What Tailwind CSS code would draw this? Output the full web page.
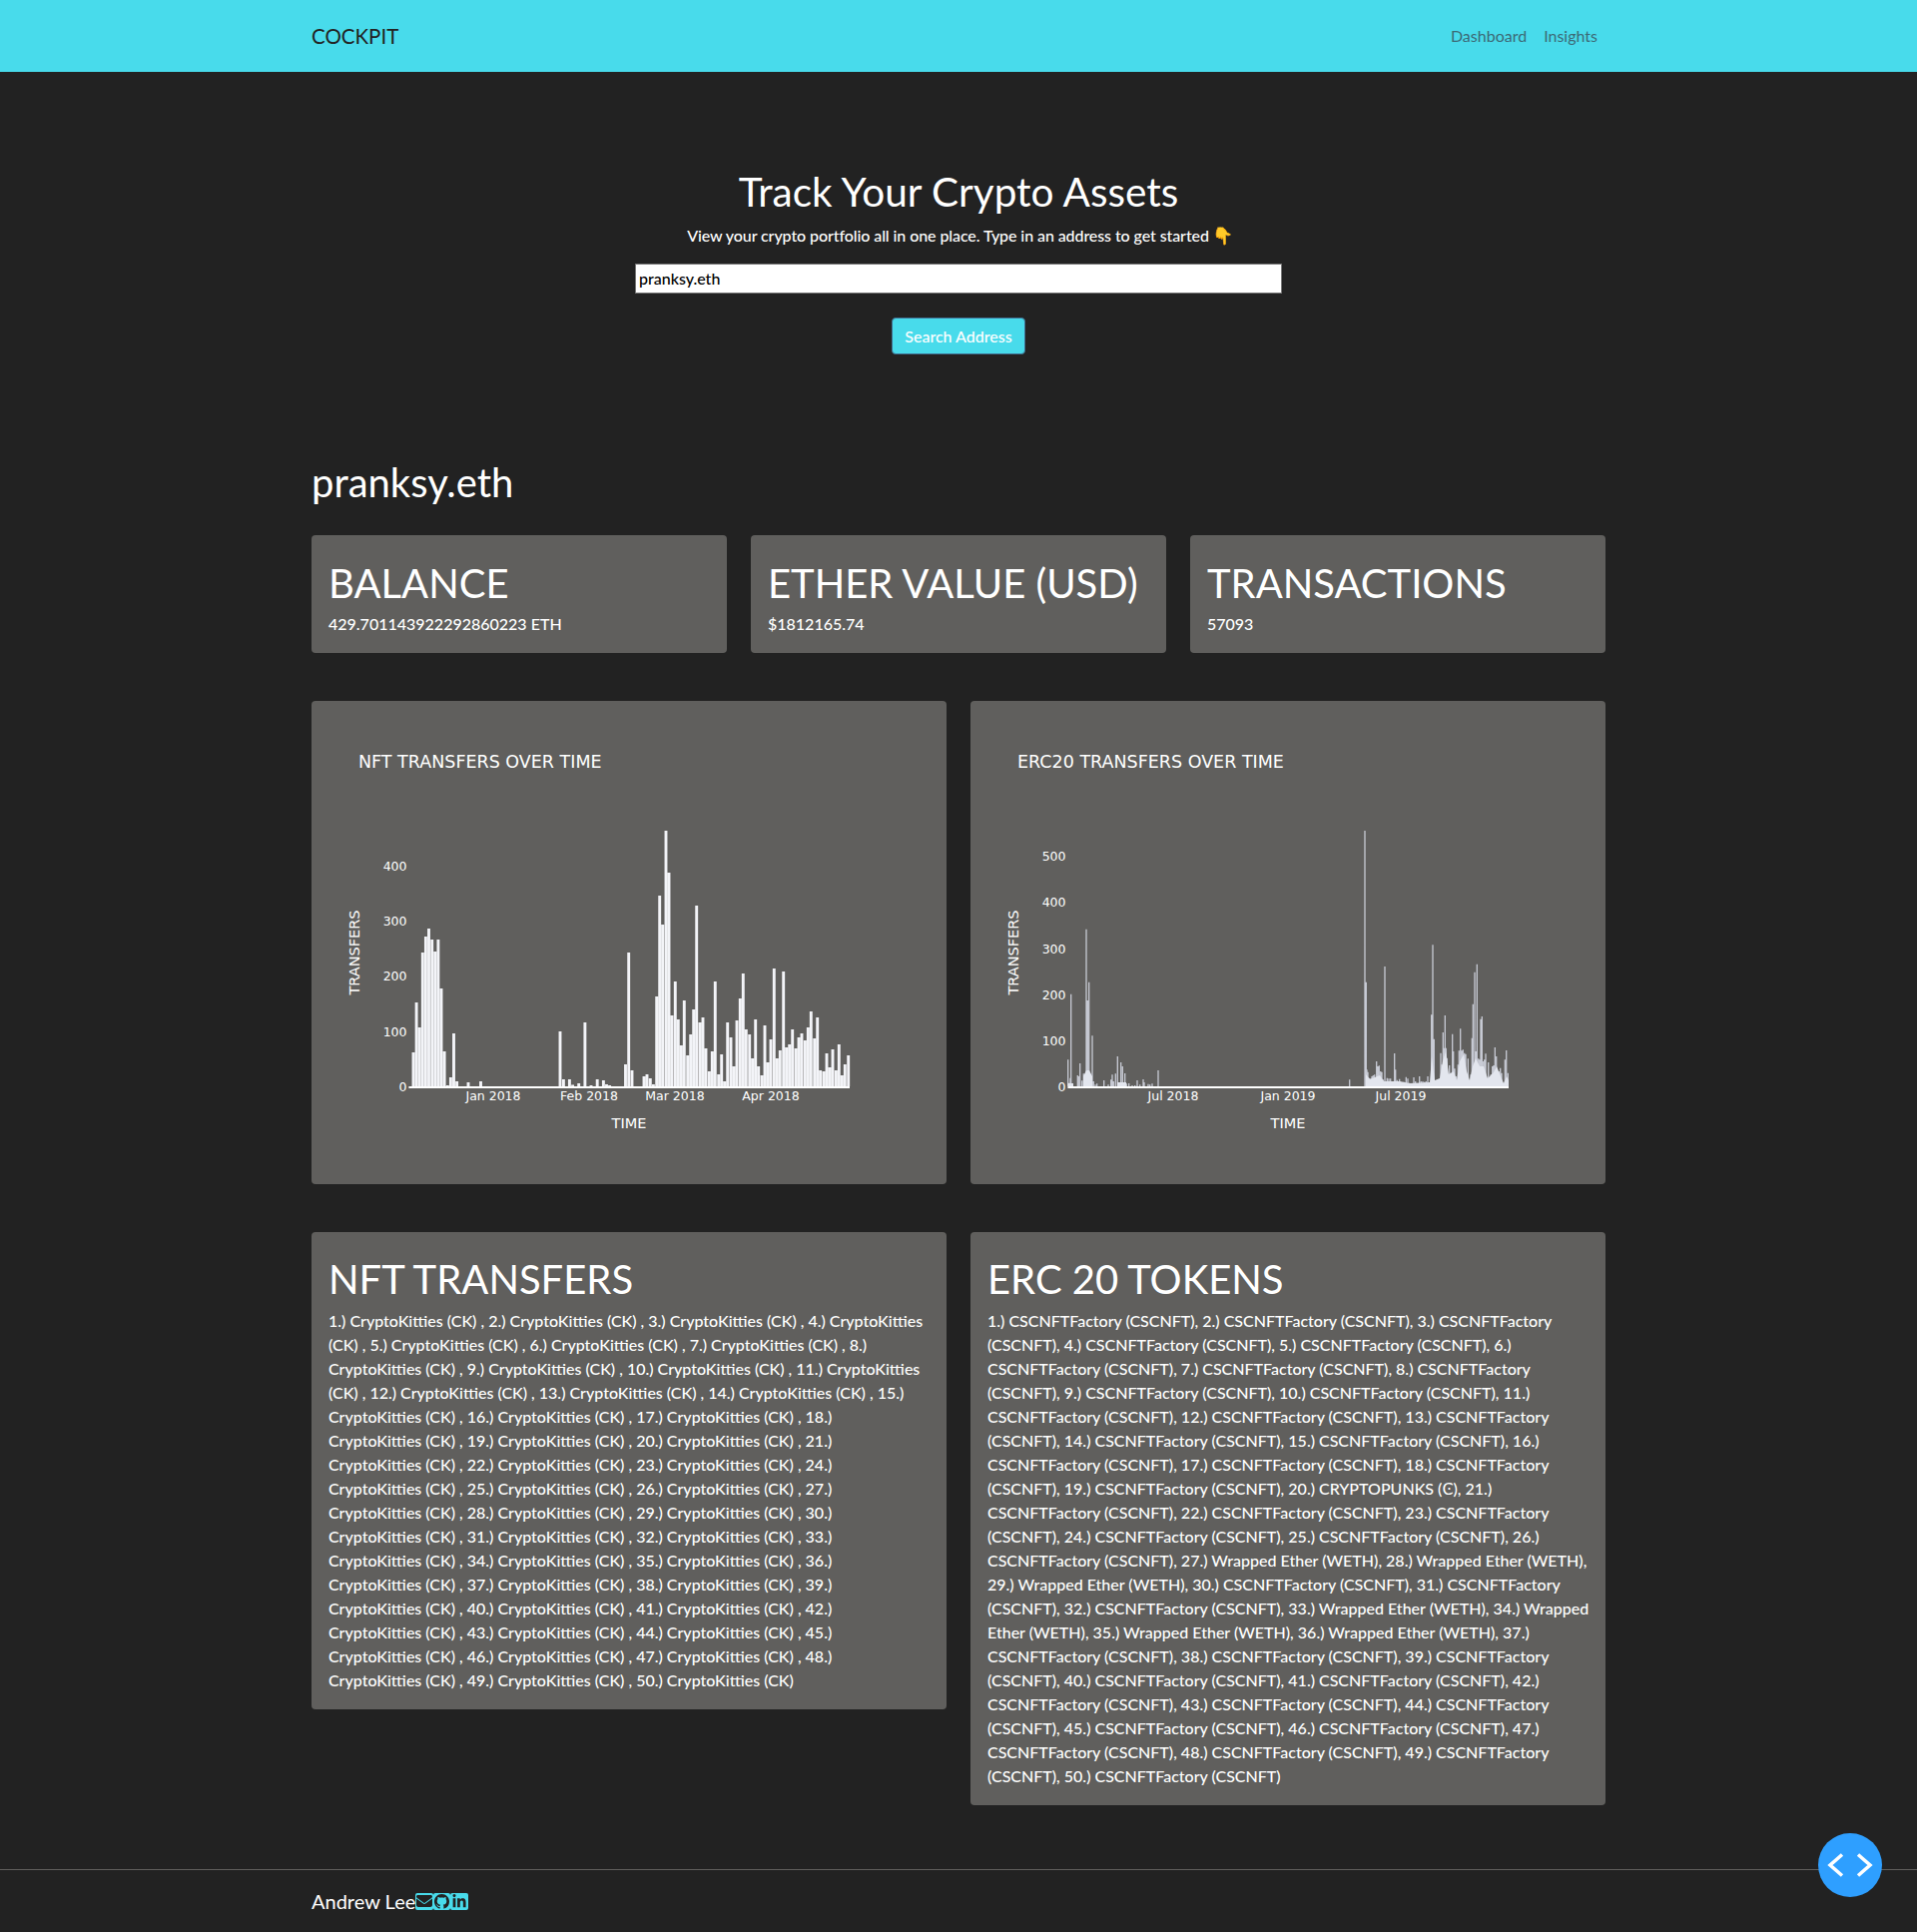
<!doctype html>
<html lang="en">
<head>
<meta charset="utf-8">
<title>Cockpit</title>
<script src="https://cdn.jsdelivr.net/npm/@tailwindcss/browser@4"></script>
</head>
<body class="bg-[#222222] text-white font-['Lato','Noto_Sans',sans-serif] text-base">
<nav class="h-[72px] bg-[#48dbeb]">
  <div class="w-[1296px] mx-auto h-full flex items-center justify-between">
    <a class="text-[20.5px] text-[#222222]">COCKPIT</a>
    <div class="flex gap-[17px] pr-2 text-base text-[#3c6a76]"><a>Dashboard</a><a>Insights</a></div>
  </div>
</nav>
<main class="w-[1296px] mx-auto">
  <section class="pt-[95px] pb-[103px] flex flex-col items-center">
    <h1 class="text-[40.5px] leading-[50px] font-normal">Track Your Crypto Assets</h1>
    <p class="mt-[7px] h-[24px] pl-[4px] leading-[24px] font-medium tracking-[-0.09px]">View your crypto portfolio all in one place. Type in an address to get started <span class="text-[17px] leading-none font-['Noto_Color_Emoji','DejaVu_Sans']">👇</span></p>
    <input class="mt-[16px] w-[648px] h-[30px] bg-white border border-[#777] px-[3px] pb-[2px] text-black font-medium outline-none" value="pranksy.eth">
    <button class="mt-[24px] w-[134px] h-[37px] rounded-[4px] bg-[#48dbeb] border border-[#3f6e8f] text-white font-medium">Search Address</button>
  </section>
  <h2 class="text-[40px] leading-[50px] mb-[28px]">pranksy.eth</h2>
  <div class="grid grid-cols-3 gap-6">
    <div class="h-[118px] bg-[#605f5d] rounded-[4px] px-[17px] pt-[23px]"><h3 class="text-[40px] leading-[50px] whitespace-nowrap">BALANCE</h3><p class="mt-[4px] leading-[24px] font-medium">429.701143922292860223 ETH</p></div>
    <div class="h-[118px] bg-[#605f5d] rounded-[4px] px-[17px] pt-[23px]"><h3 class="text-[40px] leading-[50px] whitespace-nowrap">ETHER VALUE (USD)</h3><p class="mt-[4px] leading-[24px] font-medium">$1812165.74</p></div>
    <div class="h-[118px] bg-[#605f5d] rounded-[4px] px-[17px] pt-[23px]"><h3 class="text-[40px] leading-[50px] whitespace-nowrap">TRANSACTIONS</h3><p class="mt-[4px] leading-[24px] font-medium">57093</p></div>
  </div>
  <div class="grid grid-cols-2 gap-6 mt-12">
    <div class="h-[484px] bg-[#605f5d] rounded-[4px]">
      <svg viewBox="0 0 636 484" class="block w-full h-full font-['DejaVu_Sans',sans-serif]" fill="#fff">
        <text x="47" y="67" font-size="17.500">NFT TRANSFERS OVER TIME</text>
        <text x="318" y="428" font-size="14.500" text-anchor="middle">TIME</text>
        <text transform="translate(47.500 252) rotate(-90)" font-size="14.500" text-anchor="middle">TRANSFERS</text>
        <g font-size="12.500" text-anchor="end">
          <text x="95.500" y="391">0</text><text x="95.500" y="336">100</text><text x="95.500" y="280">200</text><text x="95.500" y="225">300</text><text x="95.500" y="170">400</text>
        </g>
        <g font-size="12.500" text-anchor="middle">
          <text x="182" y="400">Jan 2018</text><text x="278" y="400">Feb 2018</text><text x="364" y="400">Mar 2018</text><text x="460" y="400">Apr 2018</text>
        </g>
        <path stroke="#f3f4f8" stroke-width="2.900" fill="none" d="M102 386v-34M105.100 386v-84M108.200 386v-59M111.300 386v-134M114.400 386v-150M117.500 386v-158M120.700 386v-147M123.800 386v-135M126.900 386v-147M130 386v-98M133.100 386v-35M136.300 386v-1M139.400 386v-9M142.500 386v-53M145.600 386v-5M157 386v-4M169.500 386v-5M249 386v-55M252.400 386v-7M258.400 386v-7M261.600 386v-1.500M267.700 386v-3M273.900 386v-64M280 386v-1M286.200 386v-7M292.400 386v-6M295.500 386v-2M298.600 386v-1M314.500 386v-22M317.700 386v-134M321 386v-16M333 386v-10M336 386v-12M339.300 386v-8M342.400 386v-2M345.700 386v-90M348.700 386v-191M351.700 386v-162M355 386v-256M358 386v-214M361 386v-71M364.300 386v-105M367.300 386v-67M370.300 386v-41M373.300 386v-86M376.700 386v-31M379.700 386v-52M382.700 386v-77M385.700 386v-181M389 386v-64M392 386v-69M395 386v-38M398.300 386v-15M401.300 386v-35M404.300 386v-105M407.700 386v-12M410.700 386v-32M413.700 386v-5M416.700 386v-64M420 386v-49M423 386v-20M426 386v-66M429.300 386v-88M432.300 386v-113M435.300 386v-57M438.700 386v-52M441.700 386v-28M444.700 386v-67M447.700 386v-20M451 386v-11M454 386v-61M457 386v-24M460 386v-47M463.300 386v-118M466.300 386v-28M469.300 386v-36M472.700 386v-115M475.700 386v-39M478.700 386v-42M481.700 386v-57M485 386v-38M488 386v-49M491 386v-53M494.300 386v-46M497.300 386v-59M500.300 386v-75M503.700 386v-48M506.700 386v-69M509.700 386v-16M513 386v-15M516 386v-33M519 386v-19M522 386v-37M525.300 386v-16M528.300 386v-42M531.300 386v-11M534.300 386v-22M537.700 386v-31"/>
        <path stroke="#fff" stroke-width="2" d="M97.400 387H539"/>
      </svg>
    </div>
    <div class="h-[484px] bg-[#605f5d] rounded-[4px]">
      <svg viewBox="0 0 636 484" class="block w-full h-full font-['DejaVu_Sans',sans-serif]" fill="#fff">
        <text x="47" y="67" font-size="17.500">ERC20 TRANSFERS OVER TIME</text>
        <text x="318" y="428" font-size="14.500" text-anchor="middle">TIME</text>
        <text transform="translate(47.500 252) rotate(-90)" font-size="14.500" text-anchor="middle">TRANSFERS</text>
        <g font-size="12.500" text-anchor="end">
          <text x="95.500" y="391">0</text><text x="95.500" y="345">100</text><text x="95.500" y="299">200</text><text x="95.500" y="253">300</text><text x="95.500" y="206">400</text><text x="95.500" y="160">500</text>
        </g>
        <g font-size="12.500" text-anchor="middle">
          <text x="203" y="400">Jul 2018</text><text x="318" y="400">Jan 2019</text><text x="431" y="400">Jul 2019</text>
        </g>
        <path stroke="#c8cbd5" stroke-width="1.300" fill="none" d="M97.700 386v-26.700M99 386v-3.300M100 386v-8.300M100.700 386v-92.300M107.300 386v-11M108.300 386v-10M109.700 386v-23M111.700 386v-5.700M113.300 386v-12.700M114.700 386v-5M116 386v-157.300M117.300 386v-86M118.700 386v-104.300M120.300 386v-8.300M122 386v-50.700M123.300 386v-5M125 386v-1.700M126.700 386v-2.700M133.700 386v-6M138 386v-1.700M140.700 386v-6.700M142 386v-11.700M143.300 386v-5M145.300 386v-12.700M147.300 386v-30M149 386v-3.300M150.700 386v-24M152.300 386v-20M154.700 386v-13M156.300 386v-2.700M158.700 386v-3M162 386v-1M164.700 386v-1M167 386v-6M169.700 386v-1.700M173 386v-7M174 386v-4M178 386v-2.300M179.700 386v-1.700M182 386v-2.700M188 386v-16M379.700 386v-6.700M395 386v-256M396.300 386v-104.300M397 386v-16.700M398 386v-14.300M399.300 386v-8.300M400.700 386v-7.700M402 386v-10M403.300 386v-11M404.700 386v-11.700M406.700 386v-25M408 386v-20M409.300 386v-20.700M410.700 386v-15M412 386v-14.300M413.300 386v-6.700M415 386v-120M417.300 386v-8.300M419 386v-7.700M420.700 386v-7.700M423 386v-5M424.700 386v-33M425.700 386v-16.700M427.300 386v-6.300M429.700 386v-7.300M431.300 386v-3.300M434 386v-4.300M436.300 386v-9.300M438 386v-7.700M439.700 386v-3.300M444 386v-9M445.700 386v-5M449.700 386v-10M451.300 386v-5M453 386v-5M454.700 386v-4.300M456.300 386v-5M458 386v-10M459.700 386v-3.300M461.700 386v-71.700M463 386v-141.700M464.300 386v-47.300M466.300 386v-5M468 386v-3.300M469.700 386v-6.700M471 386v-33.300M472.300 386v-21.700M473.300 386v-54M474.300 386v-38.300M475.300 386v-71M476.300 386v-38.300M477.300 386v-28.300M478.300 386v-11.700M479.700 386v-21M481 386v-13.300M482.700 386v-52.300M483.700 386v-35M485 386v-17.700M486.300 386v-10M488.300 386v-21.700M489.300 386v-35.700M490.700 386v-57.700M492 386v-35.700M493.300 386v-36.700M494.700 386v-33.300M496 386v-32.300M497.300 386v-11.700M498.300 386v-27.700M500 386v-5M501 386v-11.700M502.300 386v-48.300M503.300 386v-82.300M505 386v-114.300M506.300 386v-35M507.300 386v-122.300M508.700 386v-27.700M510 386v-26.700M511 386v-67.300M512.300 386v-70M513.300 386v-25M514.700 386v-26.700M516 386v-32.700M517.300 386v-6.700M518.700 386v-24M520 386v-5M521.300 386v-11.700M522.700 386v-20M524 386v-21M525.300 386v-39M526.700 386v-30M528 386v-11.700M529.300 386v-15M530.700 386v-18.300M532 386v-13.300M533.700 386v-3.300M535.300 386v-26.700M536.700 386v-36M538.300 386v-13.300"/>
        <path fill="#e3e6ee" stroke="none" d="M97.500 386V383H103V386ZM113 386V376L116 370 119 370 122 376V386ZM147 386V382H156V386ZM396 386V374L400 379 405 377 410 375 414 381 430 381 440 383 460 382 462 356 465 380 470 378 473 361 476 351 479 374 484 371 487 380 490 361 494 354 497 371 500 380 503 366 506 358 510 366 514 366 518 378 524 372 527 366 531 376 534 383 537 376 539 380V386Z"/>
        <path stroke="#fff" stroke-width="2" d="M97.400 387H539"/>
      </svg>
    </div>
  </div>
  <div class="grid grid-cols-2 gap-6 mt-12 items-start">
    <div class="bg-[#605f5d] rounded-[4px] pt-[22px] pb-[17px] px-[17px]"><h3 class="text-[40px] leading-[50px] mb-[5px]">NFT TRANSFERS</h3><p class="font-medium leading-[24px] whitespace-nowrap">1.) CryptoKitties (CK) , 2.) CryptoKitties (CK) , 3.) CryptoKitties (CK) , 4.) CryptoKitties<br>(CK) , 5.) CryptoKitties (CK) , 6.) CryptoKitties (CK) , 7.) CryptoKitties (CK) , 8.)<br>CryptoKitties (CK) , 9.) CryptoKitties (CK) , 10.) CryptoKitties (CK) , 11.) CryptoKitties<br>(CK) , 12.) CryptoKitties (CK) , 13.) CryptoKitties (CK) , 14.) CryptoKitties (CK) , 15.)<br>CryptoKitties (CK) , 16.) CryptoKitties (CK) , 17.) CryptoKitties (CK) , 18.)<br>CryptoKitties (CK) , 19.) CryptoKitties (CK) , 20.) CryptoKitties (CK) , 21.)<br>CryptoKitties (CK) , 22.) CryptoKitties (CK) , 23.) CryptoKitties (CK) , 24.)<br>CryptoKitties (CK) , 25.) CryptoKitties (CK) , 26.) CryptoKitties (CK) , 27.)<br>CryptoKitties (CK) , 28.) CryptoKitties (CK) , 29.) CryptoKitties (CK) , 30.)<br>CryptoKitties (CK) , 31.) CryptoKitties (CK) , 32.) CryptoKitties (CK) , 33.)<br>CryptoKitties (CK) , 34.) CryptoKitties (CK) , 35.) CryptoKitties (CK) , 36.)<br>CryptoKitties (CK) , 37.) CryptoKitties (CK) , 38.) CryptoKitties (CK) , 39.)<br>CryptoKitties (CK) , 40.) CryptoKitties (CK) , 41.) CryptoKitties (CK) , 42.)<br>CryptoKitties (CK) , 43.) CryptoKitties (CK) , 44.) CryptoKitties (CK) , 45.)<br>CryptoKitties (CK) , 46.) CryptoKitties (CK) , 47.) CryptoKitties (CK) , 48.)<br>CryptoKitties (CK) , 49.) CryptoKitties (CK) , 50.) CryptoKitties (CK)</p></div>
    <div class="bg-[#605f5d] rounded-[4px] pt-[22px] pb-[17px] px-[17px]"><h3 class="text-[40px] leading-[50px] mb-[5px]">ERC 20 TOKENS</h3><p class="font-medium leading-[24px] whitespace-nowrap">1.) CSCNFTFactory (CSCNFT), 2.) CSCNFTFactory (CSCNFT), 3.) CSCNFTFactory<br>(CSCNFT), 4.) CSCNFTFactory (CSCNFT), 5.) CSCNFTFactory (CSCNFT), 6.)<br>CSCNFTFactory (CSCNFT), 7.) CSCNFTFactory (CSCNFT), 8.) CSCNFTFactory<br>(CSCNFT), 9.) CSCNFTFactory (CSCNFT), 10.) CSCNFTFactory (CSCNFT), 11.)<br>CSCNFTFactory (CSCNFT), 12.) CSCNFTFactory (CSCNFT), 13.) CSCNFTFactory<br>(CSCNFT), 14.) CSCNFTFactory (CSCNFT), 15.) CSCNFTFactory (CSCNFT), 16.)<br>CSCNFTFactory (CSCNFT), 17.) CSCNFTFactory (CSCNFT), 18.) CSCNFTFactory<br>(CSCNFT), 19.) CSCNFTFactory (CSCNFT), 20.) CRYPTOPUNKS (<span class="leading-none font-['DejaVu_Sans']">Ͼ</span>), 21.)<br>CSCNFTFactory (CSCNFT), 22.) CSCNFTFactory (CSCNFT), 23.) CSCNFTFactory<br>(CSCNFT), 24.) CSCNFTFactory (CSCNFT), 25.) CSCNFTFactory (CSCNFT), 26.)<br>CSCNFTFactory (CSCNFT), 27.) Wrapped Ether (WETH), 28.) Wrapped Ether (WETH),<br>29.) Wrapped Ether (WETH), 30.) CSCNFTFactory (CSCNFT), 31.) CSCNFTFactory<br>(CSCNFT), 32.) CSCNFTFactory (CSCNFT), 33.) Wrapped Ether (WETH), 34.) Wrapped<br>Ether (WETH), 35.) Wrapped Ether (WETH), 36.) Wrapped Ether (WETH), 37.)<br>CSCNFTFactory (CSCNFT), 38.) CSCNFTFactory (CSCNFT), 39.) CSCNFTFactory<br>(CSCNFT), 40.) CSCNFTFactory (CSCNFT), 41.) CSCNFTFactory (CSCNFT), 42.)<br>CSCNFTFactory (CSCNFT), 43.) CSCNFTFactory (CSCNFT), 44.) CSCNFTFactory<br>(CSCNFT), 45.) CSCNFTFactory (CSCNFT), 46.) CSCNFTFactory (CSCNFT), 47.)<br>CSCNFTFactory (CSCNFT), 48.) CSCNFTFactory (CSCNFT), 49.) CSCNFTFactory<br>(CSCNFT), 50.) CSCNFTFactory (CSCNFT)</p></div>
  </div>
</main>
<footer class="mt-[64px] h-[63px] border-t border-[#5f5e5c]">
  <div class="w-[1296px] mx-auto h-full flex items-center text-[20px]">
    <span>Andrew Lee</span>
    <a class="w-[17.500px] h-[17px] rounded-[2px] bg-[#48dbeb] flex items-center justify-center"><svg viewBox="0 0 512 512" class="w-[16px] h-[16px]" fill="#222222"><path d="M48 64C21.500 64 0 85.500 0 112c0 15.100 7.100 29.300 19.200 38.400L236.800 313.600c11.400 8.500 27 8.500 38.400 0L492.800 150.400c12.100-9.100 19.200-23.300 19.200-38.400c0-26.500-21.500-48-48-48H48zM0 176V384c0 35.300 28.700 64 64 64H448c35.300 0 64-28.700 64-64V176L294.400 339.200c-22.800 17.100-54 17.100-76.800 0L0 176z"/></svg></a>
    <a class="w-[17.500px] h-[17px] rounded-[2px] bg-[#48dbeb] flex items-center justify-center"><svg viewBox="0 0 16 16" class="w-[15px] h-[15px]" fill="#222222"><path d="M8 0C3.580 0 0 3.580 0 8c0 3.540 2.290 6.530 5.470 7.590.4.070.55-.17.55-.38 0-.19-.01-.82-.01-1.490-2.010.37-2.530-.49-2.690-.94-.09-.23-.48-.94-.82-1.130-.28-.15-.68-.52-.01-.53.63-.01 1.080.58 1.230.82.72 1.210 1.870.87 2.330.66.07-.52.28-.87.51-1.070-1.780-.2-3.640-.89-3.640-3.950 0-.87.31-1.590.82-2.150-.08-.2-.36-1.020.08-2.120 0 0 .67-.21 2.200.82.64-.18 1.320-.27 2-.27.68 0 1.360.09 2 .27 1.530-1.040 2.200-.82 2.200-.82.44 1.100.16 1.920.08 2.120.51.56.82 1.270.82 2.150 0 3.070-1.870 3.750-3.650 3.950.29.25.54.73.54 1.480 0 1.070-.01 1.930-.01 2.200 0 .21.15.46.55.38A8.013 8.013 0 0016 8c0-4.420-3.580-8-8-8z"/></svg></a>
    <a class="w-[17.500px] h-[17px] rounded-[2px] bg-[#48dbeb] flex items-center justify-center"><svg viewBox="0 0 448 512" class="w-[14px] h-[15px]" fill="#222222"><path d="M100.280 448H7.400V148.900h92.880zM53.790 108.100C24.090 108.100 0 83.500 0 53.800a53.790 53.790 0 0 1 107.580 0c0 29.700-24.100 54.300-53.790 54.300zM447.900 448h-92.680V302.400c0-34.700-.7-79.200-48.290-79.200-48.290 0-55.690 37.700-55.690 76.700V448h-92.780V148.900h89.080v40.800h1.300c12.400-23.500 42.690-48.300 87.880-48.300 94 0 111.280 61.900 111.280 142.300V448z"/></svg></a>
  </div>
</footer>
<button class="fixed right-[35px] bottom-[35px] w-16 h-16 rounded-full bg-[#2e9fff]" aria-label="Toggle code">
  <svg viewBox="0 0 64 64" class="block w-16 h-16" fill="none" stroke="#fff" stroke-width="3.500"><path d="M24 21.500 12 32 24 42.500M40 21.500 52 32 40 42.500"/></svg>
</button>
</body>
</html>
